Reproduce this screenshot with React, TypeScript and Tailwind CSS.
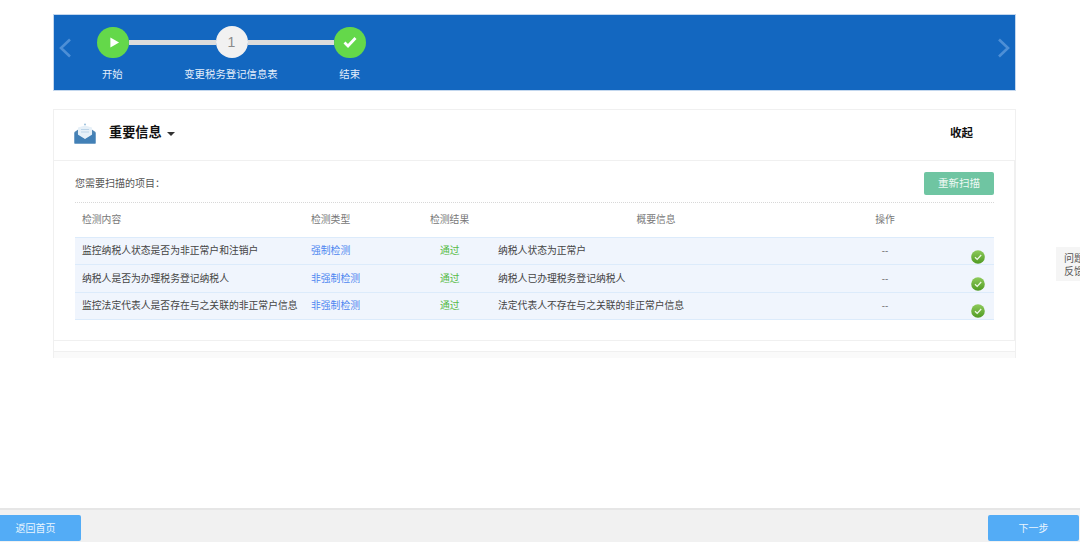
const rows = [
  ["监控纳税人状态是否为非正常户和注销户", "强制检测", "纳税人状态为正常户"],
  ["纳税人是否为办理税务登记纳税人", "非强制检测", "纳税人已办理税务登记纳税人"],
  ["监控法定代表人是否存在与之关联的非正常户信息", "非强制检测", "法定代表人不存在与之关联的非正常户信息"],
];

const gridCols = "grid grid-cols-[236px_110px_75px_320px_138px_40px]";

export default function App() {
  return (
    <div className="flex h-[542px] w-[1080px] flex-col overflow-hidden bg-white font-['Liberation_Sans','Noto_Sans_CJK_SC',sans-serif] text-[#333]">
      <div className="relative flex-1 pt-[14px]">
        <div className="mx-[53px] w-[963px]">
          <StepBanner />
          <Card />
        </div>
        <div className="absolute right-0 top-[247px] h-[34px] w-[24px] overflow-hidden bg-[#f5f5f5] pl-[8px] pt-[5px] text-[10px] leading-[13px] text-[#555]">
          <div className="w-[20px]">问题</div>
          <div className="w-[20px]">反馈</div>
        </div>
      </div>
      <footer className="flex h-[34px] items-end justify-between border-t-2 border-[#e6e6e6] bg-[#f1f1f1] pb-px">
        <button className="h-[26px] w-[81px] rounded-r-[2px] bg-[#53acf6] pr-[10px] text-[10px] text-[#eaf5fe]">返回首页</button>
        <button className="mr-px h-[26px] w-[91px] rounded-[2px] bg-[#53acf6] text-[10px] text-[#eaf5fe]">下一步</button>
      </footer>
    </div>
  );
}

function StepBanner() {
  return (
    <div className="flex h-[77px] items-start border border-[#c3d7ee] bg-[#1367c0] pt-[11px]">
      <Chevron className="ml-[4px] mt-[12px]" />
      <div className="ml-[25px] w-[269px]">
        <div className="flex h-[32px] items-center">
          <div className="flex h-[31px] w-[32px] shrink-0 items-center justify-center rounded-full bg-[#64d84a]">
            <svg viewBox="0 0 12 12" className="ml-[2px] h-[11px] w-[11px]">
              <path d="M1.500 0.500 11 6l-9.500 5.500Z" fill="#fff" />
            </svg>
          </div>
          <div className="h-[5px] flex-1 bg-[#dcdcdc]" />
          <div className="flex h-[32px] w-[32px] shrink-0 items-center justify-center rounded-full bg-[#f1f1f1] text-[14px] text-[#8a8a8a]">1</div>
          <div className="h-[5px] flex-1 bg-[#dcdcdc]" />
          <div className="flex h-[31px] w-[32px] shrink-0 items-center justify-center rounded-full bg-[#64d84a]">
            <svg viewBox="0 0 14 12" className="h-[12px] w-[14px]">
              <path d="M1.500 6.500 5 10l7.500-8" fill="none" stroke="#fff" strokeWidth="2.800" />
            </svg>
          </div>
        </div>
        <div className="-ml-[44px] mt-[10px] grid w-[356px] grid-cols-3 text-center text-[10.400px] leading-[14px] text-[#e3eefb]">
          <span>开始</span>
          <span>变更税务登记信息表</span>
          <span>结束</span>
        </div>
      </div>
      <Chevron className="ml-auto mr-[4px] mt-[12px] -scale-x-100" />
    </div>
  );
}

function Chevron({ className }: { className: string }) {
  return (
    <svg viewBox="0 0 14 20" className={`h-[20px] w-[14px] ${className}`}>
      <path d="M12 1.500 3 10l9 8.500" fill="none" stroke="#4d8fd6" strokeWidth="2.600" />
    </svg>
  );
}

function Card() {
  return (
    <div className="mt-[18px] border-x border-t border-[#f0f0f0]">
      <div className="flex h-[51px] items-center border-b border-[#f0f0f0] pb-[4px] pl-[20px] pr-[42px]">
        <MailIcon />
        <span className="ml-[13px] text-[13.200px] font-bold leading-none text-[#111]">重要信息</span>
        <span className="ml-[5px] mt-[1px] border-x-[4px] border-t-[4px] border-x-transparent border-t-[#333]" />
        <span className="ml-auto mt-[2px] text-[11.500px] font-bold text-[#111]">收起</span>
      </div>
      <div className="h-[180px] border-b border-r border-[#f0f0f0] pl-[21px] pr-[20px]">
        <div className="flex h-[42px] items-center justify-between border-b border-dotted border-[#d8d8d8] pt-[4px]">
          <span className="text-[10px] text-[#555]">您需要扫描的项目：</span>
          <button className="h-[23px] w-[70px] rounded-[2px] bg-[#6fc5a2] text-[10.500px] text-[#eef9f4]">重新扫描</button>
        </div>
        <div className={`${gridCols} h-[34px] items-center text-[9.800px] text-[#777]`}>
          <span className="pl-[7px]">检测内容</span>
          <span>检测类型</span>
          <span className="pl-[9px]">检测结果</span>
          <span className="text-center">概要信息</span>
          <span className="text-center">操作</span>
        </div>
        <div className="border-t border-[#dcebfb]">
          {rows.map(([name, type, summary]) => (
            <div key={name} className={`${gridCols} h-[27.300px] items-center border-b border-[#dcebfb] bg-[#f0f5fd] pt-px text-[9.800px]`}>
              <span className="whitespace-nowrap pl-[7px] text-[#444]">{name}</span>
              <span className="text-[#4d86f0]">{type}</span>
              <span className="pl-[19px] text-[#55bb44]">通过</span>
              <span className="pl-[2px] text-[#444]">{summary}</span>
              <span className="text-center text-[#666]">--</span>
              <CheckBadge />
            </div>
          ))}
        </div>
      </div>
      <div className="h-[10px]" />
      <div className="h-[7px] border-t border-[#f0f0f0] bg-[#fafafa]" />
    </div>
  );
}

function CheckBadge() {
  return (
    <svg viewBox="0 0 14 14" className="ml-[17px] mt-[10px] h-[14px] w-[14px]">
      <defs>
        <linearGradient id="badge" x1="0" y1="0" x2="0" y2="1">
          <stop offset="0" stopColor="#8fcb5c" />
          <stop offset="1" stopColor="#4f9a22" />
        </linearGradient>
      </defs>
      <circle cx="7" cy="7" r="6.800" fill="url(#badge)" />
      <path d="M4 7.200 6.200 9.400 10.200 5" fill="none" stroke="#eef8e6" strokeWidth="1.300" />
    </svg>
  );
}

function MailIcon() {
  return (
    <svg viewBox="0 0 22 21" className="h-[21px] w-[22px] shrink-0">
      <circle cx="11" cy="1.500" r="1" fill="#9cc0dc" />
      <path d="M0.500 9 5 6h12l4.500 3V20.500H0.500Z" fill="#4f86b5" />
      <path d="M4 4.500 11 2.500l7 2V13l-7 3.500L4 13Z" fill="#e6f0f8" />
      <path d="M7 6.500h8M7 9h8" stroke="#bcd4e8" strokeWidth="1" />
      <path d="M0.500 9.500 11 16 21.500 9.500V20.500H0.500Z" fill="#4280b6" />
    </svg>
  );
}
